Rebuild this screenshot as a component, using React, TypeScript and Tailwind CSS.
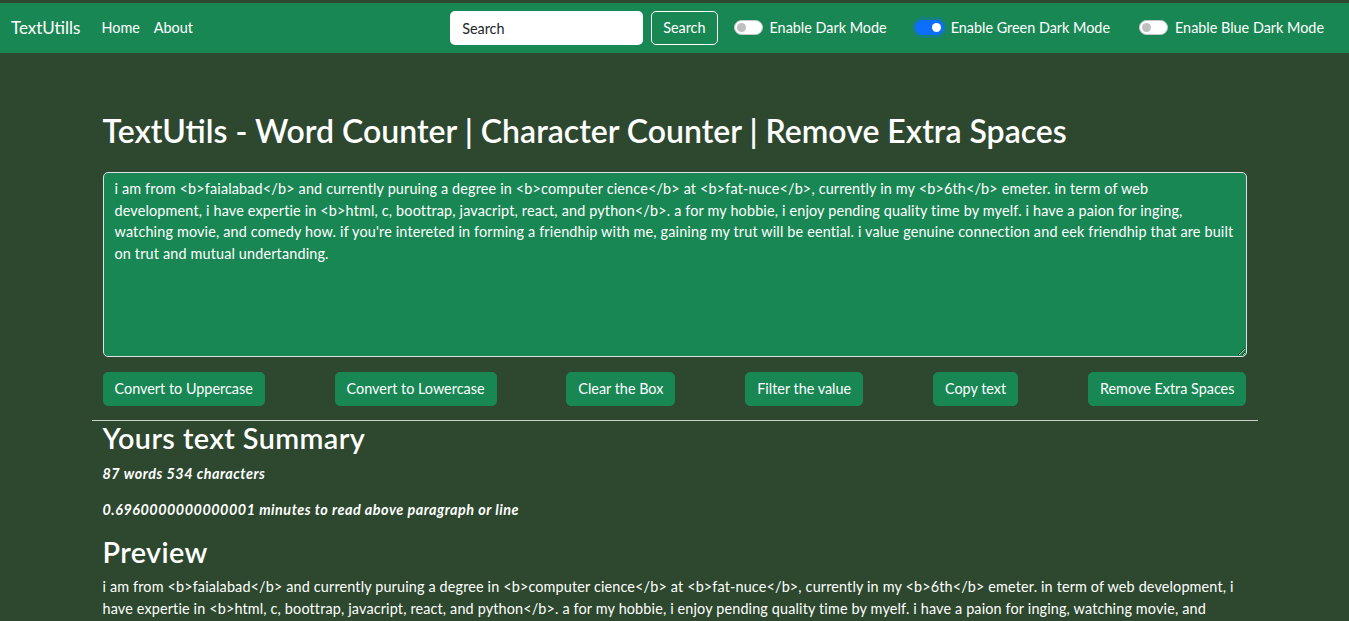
import React from 'react';

const essay =
  "i am from <b>faialabad</b> and currently puruing a degree in <b>computer cience</b> at <b>fat-nuce</b>, currently in my <b>6th</b> emeter. in term of web development, i have expertie in <b>html, c, boottrap, javacript, react, and python</b>. a for my hobbie, i enjoy pending quality time by myelf. i have a paion for inging, watching movie, and comedy how. if you're intereted in forming a friendhip with me, gaining my trut will be eential. i value genuine connection and eek friendhip that are built on trut and mutual undertanding.";

const Switch: React.FC<{ on?: boolean; label: string; className?: string }> = ({ on, label, className }) => (
  <div className={`flex items-center ${className ?? ''}`}>
    {on ? (
      <span className="relative inline-block w-[29px] h-[15px] rounded-full bg-[#0d6efd] border border-[#0d6efd] shadow-[0_0_0_3px_rgba(13,110,253,0.25)]">
        <span className="absolute right-[2px] top-[2px] w-[9px] h-[9px] rounded-full bg-white" />
      </span>
    ) : (
      <span className="relative inline-block w-[29px] h-[15px] rounded-full bg-white border border-[#c4c8cc]">
        <span className="absolute left-[2px] top-[2px] w-[9px] h-[9px] rounded-full bg-[#bfbfbf]" />
      </span>
    )}
    <label className="ml-[7px] text-white text-[14.4px]">{label}</label>
  </div>
);

const buttons = [
  'Convert to Uppercase',
  'Convert to Lowercase',
  'Clear the Box',
  'Filter the value',
  'Copy text',
  'Remove Extra Spaces',
];

export default function App() {
  return (
    <div
      className="min-h-screen bg-[#2d482e] pt-[3px] text-white"
      style={{ fontFamily: '"Segoe UI", Lato, "Open Sans", sans-serif' }}
    >
      {/* Navbar */}
      <nav className="h-[50px] bg-[#198754] flex items-center px-[11px]">
        <a className="text-[17px] text-white mr-[14px]">TextUtills</a>
        <a className="px-[7px] text-[14.4px] text-white">Home</a>
        <a className="px-[7px] text-[14.4px] text-white">About</a>
        <div className="ml-auto flex items-center">
          <input
            className="w-[193px] h-[34px] rounded-[5px] bg-white px-[12px] text-[14.4px] text-[#212529] placeholder:text-[#212529] outline-none"
            placeholder="Search"
          />
          <button className="ml-[8px] h-[34px] px-[11px] border border-white rounded-[5px] text-[14.4px] text-white">
            Search
          </button>
          <Switch label="Enable Dark Mode" className="ml-[16px]" />
          <Switch on label="Enable Green Dark Mode" className="ml-[28px]" />
          <Switch label="Enable Blue Dark Mode" className="ml-[29px] mr-[14px]" />
        </div>
      </nav>

      {/* Main */}
      <div className="max-w-[1188px] mx-auto px-[11px]">
        <div className="px-[11px]">
          <h1 className="mt-[59px] mb-[21.6px] text-[32px] leading-[1.2] font-semibold">
            TextUtils - Word Counter | Character Counter | Remove Extra Spaces
          </h1>
          <textarea
            className="block w-full h-[185px] border border-[#dee2e6] rounded-[5px] bg-[#198754] text-white px-[11px] py-[5px] text-[14.4px] leading-[21.6px] tracking-[0.16px] outline-none resize-y"
            defaultValue={essay}
          />
          <div className="mt-[15px] flex justify-between">
            {buttons.map((b) => (
              <button
                key={b}
                className="h-[34px] px-[11px] rounded-[5px] bg-[#198754] border border-[#198754] text-[14.4px] text-white"
              >
                {b}
              </button>
            ))}
          </div>
        </div>
        <hr className="mt-[14px] border-0 border-t border-[#c9cfc9]" />
        <div className="px-[11px]">
          <h2 className="text-[28.8px] leading-[1.2] font-semibold tracking-[0.4px] mb-[7px]">Yours text Summary</h2>
          <p className="font-bold italic text-[14.4px] leading-[21.6px] tracking-[0.5px] mb-[14.4px]">
            87 words 534 characters
          </p>
          <p className="font-bold italic text-[14.4px] leading-[21.6px] tracking-[0.5px] mb-[14.4px]">
            0.6960000000000001 minutes to read above paragraph or line
          </p>
          <h2 className="text-[28.8px] leading-[1.2] font-semibold tracking-[0.4px] mb-[7px]">Preview</h2>
          <p className="text-[14.4px] leading-[21.6px] tracking-[0.15px]">{essay}</p>
        </div>
      </div>
    </div>
  );
}
